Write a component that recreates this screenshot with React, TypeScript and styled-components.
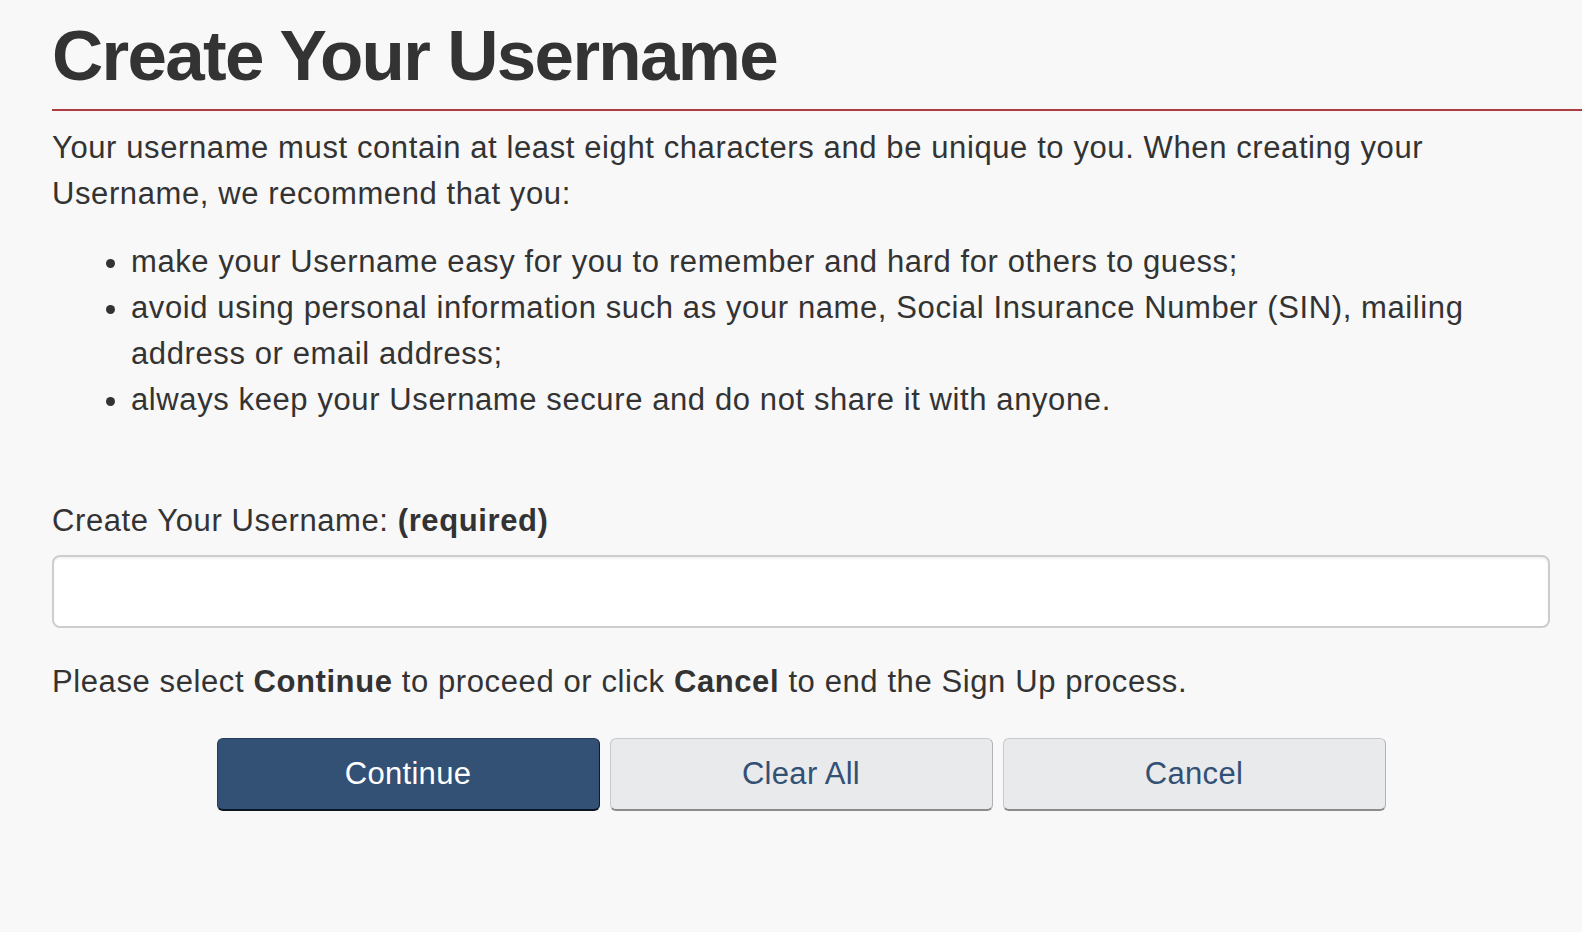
import styled, { createGlobalStyle } from "styled-components";

const GlobalStyle = createGlobalStyle`
  html, body {
    margin: 0;
    padding: 0;
    background: #f8f8f8;
  }
  body {
    font-family: "Liberation Sans", Arial, Helvetica, sans-serif;
    color: #333;
  }
`;

const Page = styled.main`
  padding: 16px 0 0 52px;
  min-height: 100vh;
  box-sizing: border-box;
`;

const Title = styled.h1`
  margin: 0;
  padding-bottom: 14px;
  font-size: 71px;
  line-height: 79px;
  font-weight: 700;
  letter-spacing: -1.7px;
  color: #333;
  border-bottom: 2px solid #af3c43;
`;

const Content = styled.section`
  padding-right: 32px;
  font-size: 31px;
  line-height: 46px;
  letter-spacing: 0.6px;
`;

const Intro = styled.p`
  margin: 14px 0 22px;
`;

const Tips = styled.ul`
  margin: 0;
  padding-left: 79px;
  li {
    line-height: 46px;
  }
`;

const Field = styled.div`
  margin-top: 75px;
  display: flex;
  flex-direction: column;
  gap: 11px;
`;

const Label = styled.label`
  display: block;
  strong {
    font-weight: 700;
  }
`;

const TextInput = styled.input`
  box-sizing: border-box;
  width: 100%;
  height: 73px;
  border: 2px solid #cdcdcd;
  border-radius: 8px;
  background: #fff;
  box-shadow: inset 0 2px 2px rgba(0, 0, 0, 0.05);
  font: inherit;
  padding: 0 16px;
  outline: none;
`;

const Note = styled.p`
  margin: 31px 0 0;
  strong {
    font-weight: 700;
  }
`;

const Actions = styled.div`
  margin-top: 33px;
  display: flex;
  justify-content: center;
  gap: 10px;
`;

const Button = styled.button<{ $primary?: boolean }>`
  box-sizing: border-box;
  width: 383px;
  height: 73px;
  border-radius: 6px;
  font-family: "Liberation Sans", Arial, sans-serif;
  font-size: 31px;
  letter-spacing: 0.3px;
  cursor: pointer;
  background: ${(p) => (p.$primary ? "#335075" : "#e9eaec")};
  color: ${(p) => (p.$primary ? "#fff" : "#335075")};
  border: 1px solid ${(p) => (p.$primary ? "#263d59" : "#c7c9cd")};
  border-right-color: ${(p) => (p.$primary ? "#0f1c2a" : "#b0b2b6")};
  border-bottom: 2px solid ${(p) => (p.$primary ? "#0c1620" : "#8c8c8c")};
`;

export default function App() {
  return (
    <>
      <GlobalStyle />
      <Page>
        <Title>Create Your Username</Title>
        <Content>
          <Intro>
            Your username must contain at least eight characters and be unique
            to you. When creating your Username, we recommend that you:
          </Intro>
          <Tips>
            <li>
              make your Username easy for you to remember and hard for others
              to guess;
            </li>
            <li>
              avoid using personal information such as your name, Social
              Insurance Number (SIN), mailing address or email address;
            </li>
            <li>
              always keep your Username secure and do not share it with anyone.
            </li>
          </Tips>
          <Field>
            <Label htmlFor="username">
              Create Your Username: <strong>(required)</strong>
            </Label>
            <TextInput id="username" type="text" />
          </Field>
          <Note>
            Please select <strong>Continue</strong> to proceed or click{" "}
            <strong>Cancel</strong> to end the Sign Up process.
          </Note>
          <Actions>
            <Button $primary>Continue</Button>
            <Button>Clear All</Button>
            <Button>Cancel</Button>
          </Actions>
        </Content>
      </Page>
    </>
  );
}
